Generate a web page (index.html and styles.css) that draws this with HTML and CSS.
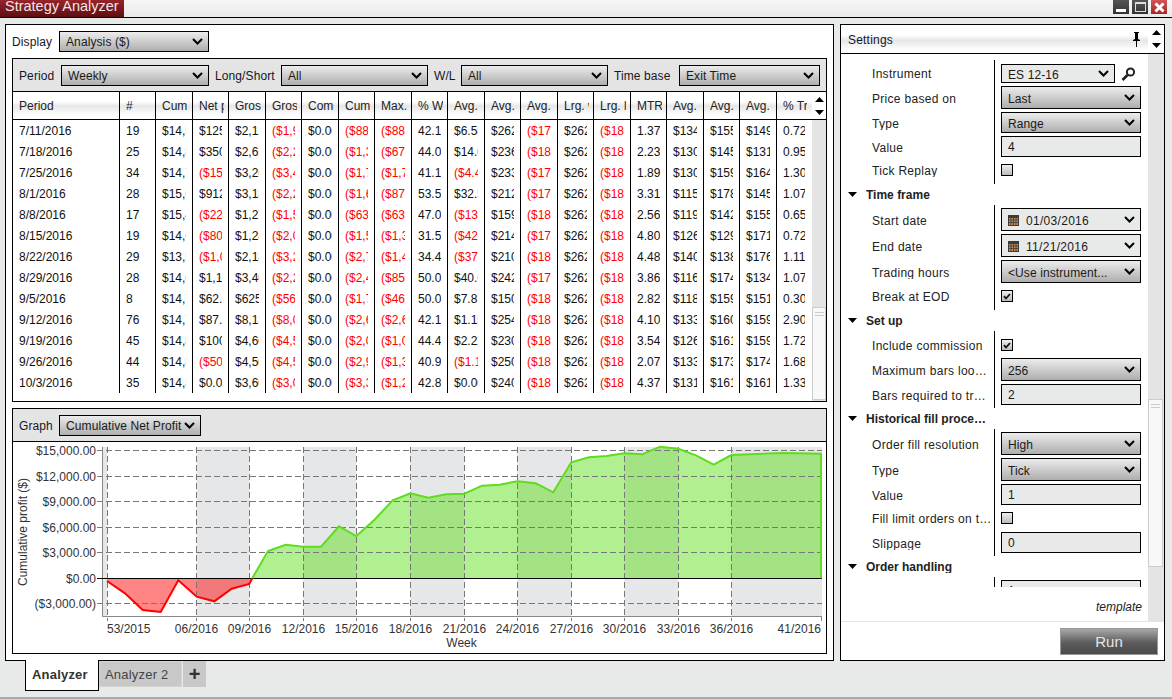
FILE: index.html
```html
<!DOCTYPE html>
<html lang="en">
<head>
<meta charset="utf-8">
<title>Strategy Analyzer</title>
<link rel="stylesheet" href="styles.css">
</head>
<body>
<svg class="defs" aria-hidden="true">
  <symbol id="chev" viewBox="0 0 11 7"><path d="M1 1l4.5 4.5L10 1" fill="none" stroke="#000" stroke-width="2"/></symbol>
  <symbol id="up" viewBox="0 0 9 5"><path d="M4.5 0L9 5H0z" fill="#000"/></symbol>
  <symbol id="down" viewBox="0 0 9 5"><path d="M0 0h9L4.5 5z" fill="#000"/></symbol>
  <symbol id="tick" viewBox="0 0 8 7"><path d="M1 3.2l2 2.3L7 1" fill="none" stroke="#111" stroke-width="1.8"/></symbol>
  <symbol id="cal" viewBox="0 0 11 11"><rect width="11" height="11" fill="#3b3b3b"/><rect x="1" y="3" width="9" height="7" fill="#c9884e"/><path d="M1 5h9M1 7.5h9M3 3v7M5.5 3v7M8 3v7" stroke="#3b3b3b" stroke-width=".8"/></symbol>
</svg>

<header class="titlebar">
  <div class="apptab">Strategy Analyzer</div>
  <div class="winbtns">
    <div class="winbtn"><span class="g-min"></span></div>
    <div class="winbtn"><span class="g-max"></span></div>
    <div class="winbtn close"><svg width="13" height="13" viewBox="0 0 13 13"><path d="M2.5 2.5l8 8M10.5 2.5l-8 8" stroke="#fff" stroke-width="3"/></svg></div>
  </div>
</header>

<main class="workspace">
  <section class="analysis">
    <div class="display-row">
      <span class="lbl l-display">Display</span>
      <div class="sel w-display"><span>Analysis ($)</span><svg class="chev"><use href="#chev"/></svg></div>
    </div>

    <div class="panel table-panel">
      <div class="toolbar">
        <span class="lbl l-period">Period</span>
        <div class="sel w-period"><span>Weekly</span><svg class="chev"><use href="#chev"/></svg></div>
        <span class="lbl l-ls">Long/Short</span>
        <div class="sel w-ls"><span>All</span><svg class="chev"><use href="#chev"/></svg></div>
        <span class="lbl l-wl">W/L</span>
        <div class="sel w-ls"><span>All</span><svg class="chev"><use href="#chev"/></svg></div>
        <span class="lbl l-tb">Time base</span>
        <div class="sel w-tb"><span>Exit Time</span><svg class="chev"><use href="#chev"/></svg></div>
      </div>
      <div class="thead">
        <div class="tr">
          <span>Period</span><span>#</span><span>Cum. net profit</span><span>Net profit</span><span>Gross profit</span><span>Gross loss</span><span>Commission</span><span>Cum. max</span><span>Max. drawdown</span><span>% Win</span><span>Avg. trade</span><span>Avg. winner</span><span>Avg. loser</span><span>Lrg. winner</span><span>Lrg. loser</span><span>MTR</span><span>Avg. MAE</span><span>Avg. MFE</span><span>Avg. ETD</span><span>% Trade</span>
        </div>
        <div class="arrows"><svg class="arw"><use href="#up"/></svg><svg class="arw"><use href="#down"/></svg></div>
      </div>
      <div class="tbody">
        <div class="rows">
          <div class="tr"><span>7/11/2016</span><span>19</span><span>$14,512.50</span><span>$125.00</span><span>$2,125.00</span><span class="n">($1,900.00)</span><span>$0.00</span><span class="n">($887.50)</span><span class="n">($887.50)</span><span>42.11</span><span>$6.58</span><span>$262.50</span><span class="n">($175.00)</span><span>$262.50</span><span class="n">($187.50)</span><span>1.37</span><span>$134.21</span><span>$155.92</span><span>$149.34</span><span>0.72</span></div>
          <div class="tr"><span>7/18/2016</span><span>25</span><span>$14,862.50</span><span>$350.00</span><span>$2,625.00</span><span class="n">($2,275.00)</span><span>$0.00</span><span class="n">($1,325.00)</span><span class="n">($675.00)</span><span>44.00</span><span>$14.00</span><span>$236.36</span><span class="n">($187.50)</span><span>$262.50</span><span class="n">($187.50)</span><span>2.23</span><span>$130.00</span><span>$145.50</span><span>$131.50</span><span>0.95</span></div>
          <div class="tr"><span>7/25/2016</span><span>34</span><span>$14,712.50</span><span class="n">($150.00)</span><span>$3,262.50</span><span class="n">($3,412.50)</span><span>$0.00</span><span class="n">($1,712.50)</span><span class="n">($1,712.50)</span><span>41.18</span><span class="n">($4.41)</span><span>$233.04</span><span class="n">($170.63)</span><span>$262.50</span><span class="n">($187.50)</span><span>1.89</span><span>$130.15</span><span>$159.19</span><span>$164.04</span><span>1.30</span></div>
          <div class="tr"><span>8/1/2016</span><span>28</span><span>$15,625.00</span><span>$912.50</span><span>$3,187.50</span><span class="n">($2,275.00)</span><span>$0.00</span><span class="n">($1,600.00)</span><span class="n">($875.00)</span><span>53.57</span><span>$32.59</span><span>$212.50</span><span class="n">($175.00)</span><span>$262.50</span><span class="n">($187.50)</span><span>3.31</span><span>$115.18</span><span>$178.57</span><span>$145.09</span><span>1.07</span></div>
          <div class="tr"><span>8/8/2016</span><span>17</span><span>$15,400.00</span><span class="n">($225.00)</span><span>$1,275.00</span><span class="n">($1,500.00)</span><span>$0.00</span><span class="n">($637.50)</span><span class="n">($637.50)</span><span>47.06</span><span class="n">($13.24)</span><span>$159.38</span><span class="n">($187.50)</span><span>$262.50</span><span class="n">($187.50)</span><span>2.56</span><span>$119.12</span><span>$142.65</span><span>$155.74</span><span>0.65</span></div>
          <div class="tr"><span>8/15/2016</span><span>19</span><span>$14,600.00</span><span class="n">($800.00)</span><span>$1,287.50</span><span class="n">($2,087.50)</span><span>$0.00</span><span class="n">($1,537.50)</span><span class="n">($1,337.50)</span><span>31.58</span><span class="n">($42.11)</span><span>$214.58</span><span class="n">($173.96)</span><span>$262.50</span><span class="n">($187.50)</span><span>4.80</span><span>$126.32</span><span>$129.61</span><span>$171.05</span><span>0.72</span></div>
          <div class="tr"><span>8/22/2016</span><span>29</span><span>$13,500.00</span><span class="n">($1,087.50)</span><span>$2,187.50</span><span class="n">($3,275.00)</span><span>$0.00</span><span class="n">($2,712.50)</span><span class="n">($1,487.50)</span><span>34.48</span><span class="n">($37.50)</span><span>$210.75</span><span class="n">($182.00)</span><span>$262.50</span><span class="n">($187.50)</span><span>4.48</span><span>$140.09</span><span>$138.36</span><span>$176.08</span><span>1.11</span></div>
          <div class="tr"><span>8/29/2016</span><span>28</span><span>$14,637.50</span><span>$1,137.50</span><span>$3,400.00</span><span class="n">($2,262.50)</span><span>$0.00</span><span class="n">($2,462.50)</span><span class="n">($850.00)</span><span>50.00</span><span>$40.63</span><span>$242.86</span><span class="n">($175.00)</span><span>$262.50</span><span class="n">($187.50)</span><span>3.86</span><span>$116.96</span><span>$174.11</span><span>$134.82</span><span>1.07</span></div>
          <div class="tr"><span>9/5/2016</span><span>8</span><span>$14,700.00</span><span>$62.50</span><span>$625.00</span><span class="n">($562.50)</span><span>$0.00</span><span class="n">($1,712.50)</span><span class="n">($462.50)</span><span>50.00</span><span>$7.81</span><span>$150.25</span><span class="n">($187.50)</span><span>$262.50</span><span class="n">($187.50)</span><span>2.82</span><span>$118.75</span><span>$159.38</span><span>$151.56</span><span>0.30</span></div>
          <div class="tr"><span>9/12/2016</span><span>76</span><span>$14,787.50</span><span>$87.50</span><span>$8,137.50</span><span class="n">($8,050.00)</span><span>$0.00</span><span class="n">($2,687.50)</span><span class="n">($2,687.50)</span><span>42.11</span><span>$1.15</span><span>$254.30</span><span class="n">($183.00)</span><span>$262.50</span><span class="n">($187.50)</span><span>4.10</span><span>$133.22</span><span>$160.62</span><span>$159.70</span><span>2.90</span></div>
          <div class="tr"><span>9/19/2016</span><span>45</span><span>$14,887.50</span><span>$100.00</span><span>$4,600.00</span><span class="n">($4,500.00)</span><span>$0.00</span><span class="n">($2,012.50)</span><span class="n">($1,012.50)</span><span>44.44</span><span>$2.22</span><span>$230.00</span><span class="n">($180.00)</span><span>$262.50</span><span class="n">($187.50)</span><span>3.54</span><span>$126.94</span><span>$161.11</span><span>$159.44</span><span>1.72</span></div>
          <div class="tr"><span>9/26/2016</span><span>44</span><span>$14,837.50</span><span class="n">($50.00)</span><span>$4,500.00</span><span class="n">($4,550.00)</span><span>$0.00</span><span class="n">($2,950.00)</span><span class="n">($1,312.50)</span><span>40.91</span><span class="n">($1.14)</span><span>$250.00</span><span class="n">($185.00)</span><span>$262.50</span><span class="n">($187.50)</span><span>2.07</span><span>$133.52</span><span>$173.30</span><span>$174.43</span><span>1.68</span></div>
          <div class="tr"><span>10/3/2016</span><span>35</span><span>$14,837.50</span><span>$0.00</span><span>$3,600.00</span><span class="n">($3,000.00)</span><span>$0.00</span><span class="n">($3,312.50)</span><span class="n">($1,250.00)</span><span>42.86</span><span>$0.00</span><span>$240.00</span><span class="n">($180.00)</span><span>$262.50</span><span class="n">($187.50)</span><span>4.37</span><span>$131.43</span><span>$161.79</span><span>$161.43</span><span>1.33</span></div>
        </div>
        <div class="track track-table"><div class="thumb thumb-table"><i></i></div></div>
      </div>
    </div>

    <div class="panel graph-panel">
      <div class="toolbar">
        <span class="lbl l-graph">Graph</span>
        <div class="sel w-graph"><span>Cumulative Net Profit</span><svg class="chev"><use href="#chev"/></svg></div>
      </div>
      <svg class="chart" viewBox="13 442 813 211" width="813" height="211">
        <g class="bands">
          <rect x="102" y="447" width="5" height="169"/>
          <rect x="196.5" y="447" width="53" height="169"/>
          <rect x="303.3" y="447" width="53" height="169"/>
          <rect x="410.3" y="447" width="54" height="169"/>
          <rect x="517.3" y="447" width="54" height="169"/>
          <rect x="624.3" y="447" width="54" height="169"/>
          <rect x="731.3" y="447" width="90.7" height="169"/>
        </g>
        <path class="red-fill" d="M107 578.3V581L125 593.3 142.7 610 160.7 612 178.3 580.3 196.7 596.7 214.3 601.3 231.7 588.7 249.3 584 252.3 578.3Z"/>
        <path class="green-fill" d="M252.3 578.3L268 551 285.7 544.7 303.3 546.7 321 546.7 339 526.3 356.3 536 374.3 520 392.7 500.3 410.3 493.3 428.3 497.7 446.3 494.3 464.3 493.7 482 485.7 499.7 484.7 517.3 481.3 535.7 483.3 553.3 492.3 571.3 462.3 589 457.3 606.7 456 624.3 453.3 642.3 454.3 660 446.7 678.3 448.7 696 455.3 713.7 464.7 731.3 455 783 453 821 453.7V578.3Z"/>
        <g class="grid">
          <path d="M97 450.5H822M97 476.5H822M97 501.5H822M97 527.5H822M97 552.5H822M97 603.5H822"/>
          <path d="M107.5 447V621M196.5 447V621M249.5 447V621M303.5 447V621M356.5 447V621M410.5 447V621M464.5 447V621M517.5 447V621M571.5 447V621M624.5 447V621M678.5 447V621M731.5 447V621"/>
        </g>
        <path class="axis" d="M102.5 447V616.5H822M821.5 616V621"/>
        <path class="zero" d="M97 578.5H822"/>
        <path class="red-line" d="M107 581L125 593.3 142.7 610 160.7 612 178.3 580.3 196.7 596.7 214.3 601.3 231.7 588.7 249.3 584 252.3 578.3"/>
        <path class="green-line" d="M252.3 578.3L268 551 285.7 544.7 303.3 546.7 321 546.7 339 526.3 356.3 536 374.3 520 392.7 500.3 410.3 493.3 428.3 497.7 446.3 494.3 464.3 493.7 482 485.7 499.7 484.7 517.3 481.3 535.7 483.3 553.3 492.3 571.3 462.3 589 457.3 606.7 456 624.3 453.3 642.3 454.3 660 446.7 678.3 448.7 696 455.3 713.7 464.7 731.3 455 783 453 821 453.7V578.3"/>
        <g class="ylabels">
          <text x="96" y="455">$15,000.00</text>
          <text x="96" y="481">$12,000.00</text>
          <text x="96" y="506">$9,000.00</text>
          <text x="96" y="532">$6,000.00</text>
          <text x="96" y="557">$3,000.00</text>
          <text x="96" y="583">$0.00</text>
          <text x="96" y="608">($3,000.00)</text>
        </g>
        <text class="ytitle" transform="translate(27 532) rotate(-90)">Cumulative profit ($)</text>
        <g class="xlabels">
          <text x="107" y="633" class="start">53/2015</text>
          <text x="196.5" y="633">06/2016</text>
          <text x="249.5" y="633">09/2016</text>
          <text x="303.5" y="633">12/2016</text>
          <text x="356.5" y="633">15/2016</text>
          <text x="410.5" y="633">18/2016</text>
          <text x="464.5" y="633">21/2016</text>
          <text x="517.5" y="633">24/2016</text>
          <text x="571.5" y="633">27/2016</text>
          <text x="624.5" y="633">30/2016</text>
          <text x="678.5" y="633">33/2016</text>
          <text x="731.5" y="633">36/2016</text>
          <text x="821" y="633" class="end">41/2016</text>
          <text x="461.5" y="647">Week</text>
        </g>
      </svg>
    </div>
  </section>

  <aside class="settings">
    <div class="set-head">
      <span class="set-title">Settings</span>
      <svg class="pin" width="7" height="15" viewBox="0 0 7 15"><path d="M1 0h5v1H5v6l2 1v1H4v6H3V9H0V8l2-1V1H1z" fill="#000"/></svg>
      <div class="arrows set-arrows"><svg class="arw"><use href="#up"/></svg><svg class="arw"><use href="#down"/></svg></div>
    </div>
    <div class="set-main">
      <div class="set-col">
        <div class="set-scroll">
          <div class="gbody g1">
            <div class="row"><span class="rl rl-top">Instrument</span>
              <div class="inst"><div class="sel flat w-inst"><span>ES 12-16</span><svg class="chev"><use href="#chev"/></svg></div>
              <svg class="mag" width="15" height="14" viewBox="0 0 15 14"><circle cx="9.5" cy="5" r="3.6" fill="none" stroke="#222" stroke-width="2"/><path d="M6.5 8L1.5 13" stroke="#222" stroke-width="2.6"/></svg></div></div>
            <div class="row"><span class="rl">Price based on</span><div class="sel"><span>Last</span><svg class="chev"><use href="#chev"/></svg></div></div>
            <div class="row"><span class="rl">Type</span><div class="sel short"><span>Range</span><svg class="chev"><use href="#chev"/></svg></div></div>
            <div class="row"><span class="rl">Value</span><div class="inp">4</div></div>
            <div class="row chk-row"><span class="rl">Tick Replay</span><div class="chk"></div></div>
          </div>
          <div class="ghead"><svg class="tri"><use href="#down"/></svg><span>Time frame</span></div>
          <div class="gbody g1">
            <div class="row"><span class="rl">Start date</span><div class="sel flat"><span class="dt"><svg class="cal"><use href="#cal"/></svg>01/03/2016</span><svg class="chev"><use href="#chev"/></svg></div></div>
            <div class="row"><span class="rl">End date</span><div class="sel flat"><span class="dt"><svg class="cal"><use href="#cal"/></svg>11/21/2016</span><svg class="chev"><use href="#chev"/></svg></div></div>
            <div class="row"><span class="rl">Trading hours</span><div class="sel"><span>&lt;Use instrument...</span><svg class="chev"><use href="#chev"/></svg></div></div>
            <div class="row chk-row"><span class="rl">Break at EOD</span><div class="chk"><svg class="tick"><use href="#tick"/></svg></div></div>
          </div>
          <div class="ghead"><svg class="tri"><use href="#down"/></svg><span>Set up</span></div>
          <div class="gbody g3">
            <div class="row chk-row"><span class="rl">Include commission</span><div class="chk"><svg class="tick"><use href="#tick"/></svg></div></div>
            <div class="row"><span class="rl">Maximum bars look back</span><div class="sel"><span>256</span><svg class="chev"><use href="#chev"/></svg></div></div>
            <div class="row"><span class="rl">Bars required to trade</span><div class="inp">2</div></div>
          </div>
          <div class="ghead"><svg class="tri"><use href="#down"/></svg><span>Historical fill processing</span></div>
          <div class="gbody g4">
            <div class="row"><span class="rl">Order fill resolution</span><div class="sel"><span>High</span><svg class="chev"><use href="#chev"/></svg></div></div>
            <div class="row"><span class="rl">Type</span><div class="sel"><span>Tick</span><svg class="chev"><use href="#chev"/></svg></div></div>
            <div class="row"><span class="rl">Value</span><div class="inp">1</div></div>
            <div class="row chk-row chk-wide"><span class="rl rl-wide">Fill limit orders on touch</span><div class="chk"></div></div>
            <div class="row"><span class="rl">Slippage</span><div class="inp">0</div></div>
          </div>
          <div class="ghead"><svg class="tri"><use href="#down"/></svg><span>Order handling</span></div>
          <div class="gbody g1">
            <div class="row"><span class="rl">Entries per direction</span><div class="inp">1</div></div>
          </div>
        </div>
        <div class="template">template</div>
      </div>
      <div class="track track-set"><div class="thumb thumb-set"><i></i></div></div>
    </div>
    <div class="set-foot"><button class="run" type="button">Run</button></div>
  </aside>
</main>

<nav class="tabs">
  <div class="tab active">Analyzer</div>
  <div class="tab other">Analyzer 2</div>
  <div class="tab plus">+</div>
</nav>
<div class="statusline"></div>
</body>
</html>
```
FILE: styles.css
```css
* { box-sizing: border-box; }
html, body { margin: 0; padding: 0; }
body {
  width: 1172px; height: 699px; overflow: hidden;
  display: flex; flex-direction: column;
  background: #e8e9e9;
  font: 12px/1 "Liberation Sans", Arial, sans-serif;
  color: #1a1a1a;
}
.defs { display: none; }

/* title bar */
.titlebar {
  height: 18px; flex: none; display: flex; justify-content: space-between;
  border-bottom: 1px solid #000;
  background: linear-gradient(#f6f6f6, #e9eaea);
  overflow: hidden;
}
.apptab {
  width: 124px; height: 17px; padding: 0 0 0 5px;
  background: linear-gradient(#96242b, #5e0f12);
  color: #f2e6e6; font-size: 14.5px; line-height: 13px; white-space: nowrap;
}
.winbtns { display: flex; gap: 3px; padding-right: 5px; }
.winbtn {
  width: 16px; height: 14px; background: linear-gradient(#555, #333);
  display: flex; align-items: center; justify-content: center;
}
.winbtn.close { background: linear-gradient(#d45555, #a82525); }
.g-min { width: 10px; height: 3px; background: #fff; margin-top: 6px; }
.g-max { width: 11px; height: 10px; border: 1px solid #ddd; border-top-width: 2px; }

/* layout */
.workspace { height: 643px; flex: none; display: flex; gap: 6px; padding: 6px 0 0 5px; }
.analysis {
  width: 829px; height: 637px; background: #fff; border: 1px solid #000;
  padding: 6px; display: flex; flex-direction: column; gap: 6px;
}
.display-row { display: flex; align-items: center; height: 21px; }
.panel { border: 1px solid #000; width: 815px; }
.table-panel { height: 344px; }
.graph-panel { height: 246px; }

.toolbar {
  height: 33px; background: #e4e4e4; border-bottom: 1px solid #000;
  display: flex; align-items: center; padding-left: 6px;
}
.toolbar .lbl, .toolbar .sel span { padding-top: 2px; }
.lbl { white-space: nowrap; color: #161628; letter-spacing: .1px; }
.l-display { width: 47px; }
.l-period { width: 42px; }
.l-ls { width: 66px; margin-left: 6px; }
.l-wl { width: 27px; margin-left: 6px; }
.l-tb { width: 65px; margin-left: 6px; }
.l-graph { width: 40px; }

.sel {
  height: 100%; min-height: 19px; border: 1px solid #000; padding: 0 5px 0 6px;
  display: flex; align-items: center; justify-content: space-between;
  background: linear-gradient(#ececec 0, #d6d6d6 35%, #aeaeae 100%);
  white-space: nowrap; letter-spacing: .1px;
}
.toolbar .sel, .display-row .sel { height: 21px; flex: none; }
.sel.flat { background: #e8e9e9; }
.w-display { width: 150px; }
.w-period { width: 148px; }
.w-ls { width: 147px; }
.w-tb { width: 141px; }
.w-graph { width: 142px; }
.chev { width: 11px; height: 7px; flex: none; }

/* table: the column rules are painted on the row so a cell's text can clip short of them */
.thead { display: flex; height: 28px; border-bottom: 1px solid #000; }
.tr {
  display: grid;
  grid-template-columns: 107px repeat(9, 36px 37px) 35px;
  background-image:
    repeating-linear-gradient(90deg, #000 0 1px, transparent 1px 73px),
    repeating-linear-gradient(90deg, #000 0 1px, transparent 1px 73px);
  background-position: 106px 0, 142px 0;
  background-repeat: no-repeat;
}
.tr span {
  display: block; margin: 0 7px 0 6px; overflow: hidden; white-space: nowrap;
  line-height: 23px; height: 21px; color: #111;
}
.tr span.n { color: #f00; }
.thead .tr {
  width: 799px; height: 27px;
  background-image:
    repeating-linear-gradient(90deg, #000 0 1px, transparent 1px 73px),
    repeating-linear-gradient(90deg, #000 0 1px, transparent 1px 73px),
    linear-gradient(#fff 0, #fff 35%, #e6e6e6 52%, #fff 85%);
  background-position: 106px 0, 142px 0, 0 0;
}
.thead .tr span { line-height: 29px; height: 27px; color: #222; margin-right: 5px; }
.arrows { width: 14px; display: flex; flex-direction: column; align-items: center; justify-content: center; gap: 8px; }
.arw { width: 9px; height: 5px; display: block; }
.tbody { display: flex; height: 281px; }
.rows { width: 799px; }
.rows .tr { height: 21px; }

.track { background: #e4e4e4; }
.track-table { width: 14px; }
.thumb { background: #f8f8f8; border: 1px solid #ccc; display: flex; justify-content: center; padding-top: 4px; }
.thumb i { display: block; width: 9px; height: 4px; border-top: 1px solid #ccc; border-bottom: 1px solid #ccc; }
.thumb-table { margin-top: 187px; height: 93px; width: 14px; }

/* chart */
.chart { display: block; }
.bands rect { fill: #e6e7e9; }
.red-fill { fill: rgba(255, 0, 0, .48); }
.green-fill { fill: rgba(92, 224, 22, .48); }
.grid path { fill: none; stroke: #777; stroke-width: 1; stroke-dasharray: 6 3; }
.axis { fill: none; stroke: #888; }
.zero { stroke: #000; stroke-width: 1; fill: none; }
.red-line { fill: none; stroke: #f00; stroke-width: 2; }
.green-line { fill: none; stroke: #5fdc1e; stroke-width: 2; }
.chart text { font: 12px "Liberation Sans", Arial, sans-serif; fill: #333; }
.ylabels text { text-anchor: end; }
.ytitle { text-anchor: middle; }
.xlabels text { text-anchor: middle; }
.xlabels text.start { text-anchor: start; }
.xlabels text.end { text-anchor: end; }

/* settings */
.settings {
  width: 325px; height: 637px; background: #fff; border: 1px solid #000;
  display: flex; flex-direction: column;
}
.set-head { height: 29px; flex: none; border-bottom: 1px solid #000; display: flex; align-items: center; }
.set-title {
  width: 307px; height: 28px; line-height: 31px; padding-left: 7px; color: #161628; letter-spacing: .2px;
  background: linear-gradient(#fff 0, #fff 35%, #e6e6e6 55%, #fff 90%);
}
.pin { margin-left: -15px; margin-right: 8px; }
.set-arrows { width: 16px; }
.set-main { display: flex; height: 567px; flex: none; }
.set-col { width: 307px; }
.set-scroll { height: 533px; padding-top: 6px; overflow: hidden; }
.track-set { width: 16px; }
.thumb-set { margin-top: 345px; height: 168px; width: 15px; }

.gbody {
  display: flex; flex-direction: column; gap: 3px; width: 307px;
  background: linear-gradient(#000, #000) 153px 0 / 1px 100% no-repeat;
}
.g1 { padding: 3px 0 4px; }
.g1:first-child { padding-top: 4px; }
.g3 { padding: 4px 0 3px; }
.g4 { padding: 3px 0; }
.row { display: grid; grid-template-columns: 160px 140px; align-items: center; min-height: 21px; }
.row .sel { height: 23px; }
.row .sel.short { height: 21px; }
.row .inst .sel { height: 19px; }
.row .sel > span { padding-top: 2px; }
.row:has(.inst) { min-height: 19px; }
.rl {
  padding: 2px 0 0 31px; width: 149px; overflow: hidden; text-overflow: ellipsis; white-space: nowrap;
  color: #222; letter-spacing: .3px;
}
.rl-top { padding-top: 0; }
.rl-wide { width: 153px; }
.inst { display: flex; align-items: center; gap: 6px; }
.w-inst { width: 114px; }
.mag { flex: none; }
.inp { height: 21px; border: 1px solid #000; background: #e8e9e9; padding-left: 6px; line-height: 20px; }
.chk-row { min-height: 12px; height: 12px; margin: 4px 0; }
.chk-wide { margin-bottom: 5px; }
.chk {
  width: 12px; height: 12px; border: 1px solid #000;
  background: linear-gradient(#eee, #bbb);
  display: flex; align-items: center; justify-content: center;
}
.tick { width: 8px; height: 7px; }
.ghead { height: 21px; display: flex; align-items: center; padding-left: 7px; font-weight: bold; color: #222; }
.ghead span { margin-left: 9px; width: 122px; overflow: hidden; white-space: nowrap; text-overflow: ellipsis; }
.tri { width: 9px; height: 5px; flex: none; }
.dt { display: flex; align-items: center; gap: 7px; letter-spacing: .3px; }
.cal { width: 11px; height: 11px; }
.template { height: 34px; padding: 14px 6px 0 0; text-align: right; font-style: italic; color: #222; }

.set-foot {
  height: 39px; border-top: 1px solid #e4e4e4; display: flex; justify-content: flex-end;
  padding: 6px 6px 0 0;
}
.run {
  width: 98px; height: 27px; border: 1px solid #999;
  background: linear-gradient(#a8a8a8, #5c5c5c 55%, #4a4a4a);
  color: #e6e6e6; font: 15px "Liberation Sans", Arial, sans-serif; padding: 0;
}

/* tabs */
.tabs { height: 37px; flex: none; margin-top: -1px; padding-left: 25px; display: flex; align-items: flex-start; }
.tab { display: flex; align-items: center; font-size: 13px; color: #333; }
.tab.active {
  width: 74px; height: 31px; background: #fff; border: 1px solid #000; border-top: 0;
  font-weight: bold; padding: 0 0 2px 6px; letter-spacing: .2px;
}
.tab.other { width: 83px; height: 26px; margin-top: 1px; padding-left: 5px; background: #c8c8c8; border: 1px solid #d4d4d4; letter-spacing: .2px; color: #444; }
.tab.plus { width: 23px; height: 26px; margin-top: 1px; margin-left: 1px; justify-content: center; background: #c8c8c8; font-size: 20px; font-weight: bold; }
.statusline { height: 2px; flex: none; background: #a9a9a9; }
```
